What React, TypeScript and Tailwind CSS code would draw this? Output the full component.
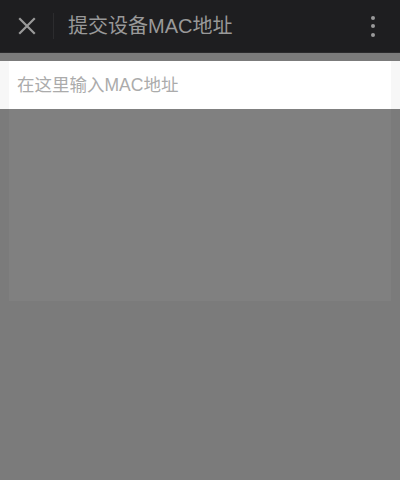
function CloseIcon() {
    return (
        <svg width="18" height="18" viewBox="0 0 18 18" fill="none">
            <path d="M2 2 L16 16 M16 2 L2 16" stroke="#9a9a9a" strokeWidth="2.2" strokeLinecap="square" />
        </svg>
    )
}

function MoreIcon() {
    return (
        <div className="flex flex-col gap-[4.5px] items-center">
            <span className="block w-[4px] h-[4px] rounded-full bg-[#9a9a9a]" />
            <span className="block w-[4px] h-[4px] rounded-full bg-[#9a9a9a]" />
            <span className="block w-[4px] h-[4px] rounded-full bg-[#9a9a9a]" />
        </div>
    )
}

function App() {
    return (
        <div className="h-[480px] w-full bg-[#7b7b7b] overflow-hidden" style={{ fontFamily: '"Liberation Sans", "Noto Sans CJK SC", sans-serif' }}>
            <div className="h-[53px] bg-[#1e1e20] border-b border-[#2a2a2c] flex items-center">
                <div className="w-[53px] h-full flex items-center justify-center">
                    <CloseIcon />
                </div>
                <div className="w-px h-[26px] bg-[#2c2c2e]" />
                <div className="ml-[14px] text-[20px] text-[#999999] flex-1">提交设备MAC地址</div>
                <div className="w-[54px] h-full flex items-center justify-center">
                    <MoreIcon />
                </div>
            </div>
            <div className="h-[8px]" />
            <div className="bg-[#f7f7f7] px-[9px]">
                <div className="bg-white h-[48px] flex items-center pl-[8px] text-[17.5px] text-[#ababab]">
                    在这里输入MAC地址
                </div>
            </div>
            <div className="mx-[9px] h-[192px] bg-[#808080]" />
        </div>
    )
}

export default App
